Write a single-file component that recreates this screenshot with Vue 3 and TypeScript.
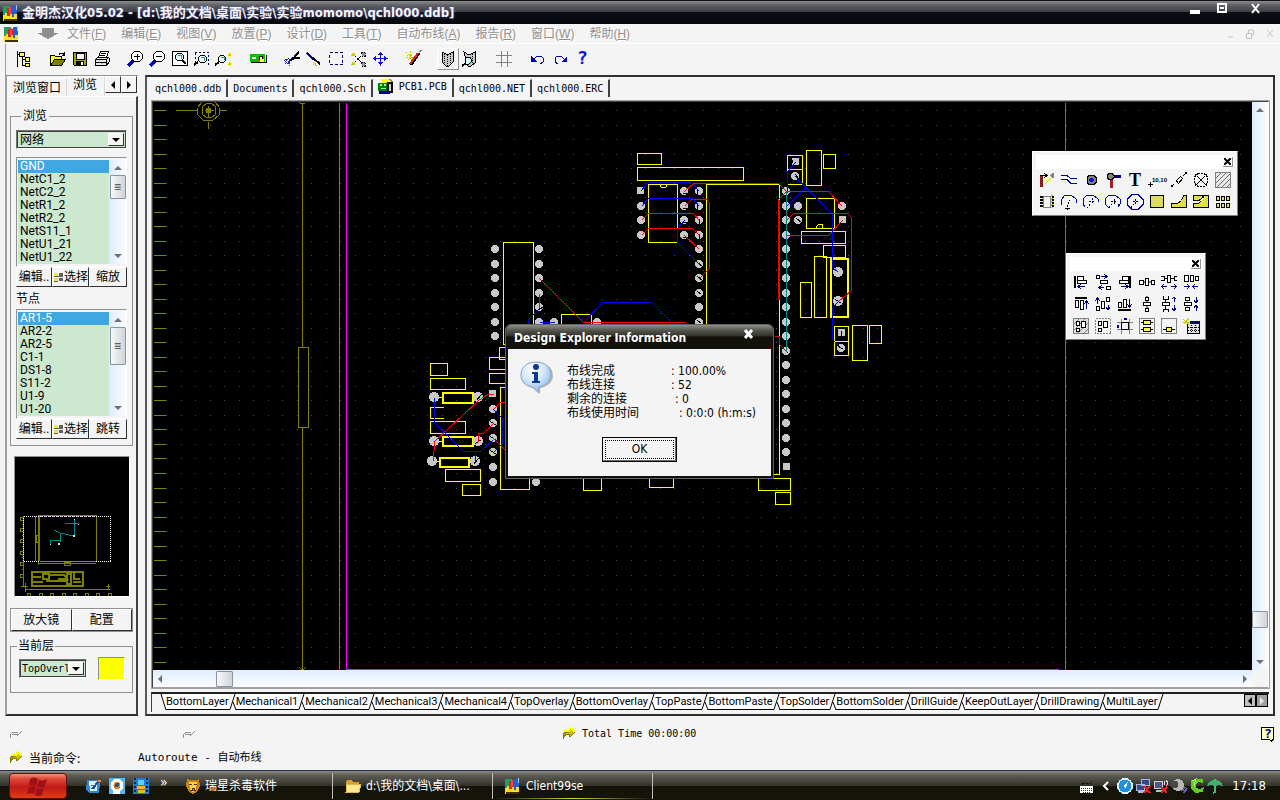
<script setup lang="ts">
import { h, ref } from 'vue'

type Shape = {
  d?: string
  f?: string
  s?: string
  w?: number
  dash?: string
  t?: string
  x?: number
  y?: number
  size?: number
  font?: string
}

const p = (d: string, f = 'none', s = 'none', w = 1, dash = ''): Shape => ({ d, f, s, w, dash })
const txt = (t: string, x: number, y: number, size: number, f = '#000', font = 'Liberation Serif'): Shape => ({ t, x, y, size, f, font })

const K = '#000'
const Y = '#ffff40'
const B = '#0000c0'
const N = '#000080'
const G = '#808080'
const O = '#c8c800'

const lens = 'M6.5.5h5l3 3v4l-3 3h-5l-3-3v-4z'

const icons: Record<string, Shape[]> = {
  app: [
    p('M0 1h7v9H0z', '#20a060'), p('M4 3h7v9H4z', '#e02020'), p('M9 1h5v11H9z', '#2060d0'),
    p('M13 0h1v5h-1z', '#a0c8ff'), p('M6 2h2v7H6z', '#ff4040'), p('M0 10h2v-2h2v3h3V9h2v3h2V9h3v7H0z', '#ffe020'),
    p('M1 14h13v2H1z', '#403000'), p('M1 12h12v2H1z', '#ffe020')
  ],
  drop: [p('M5 0h12v5h5L11 11 0 5h5z', '#909090')],
  tree: [
    p('M1.5 0v16M1.5 3.5H4M6.5 6v8.5H9M6.5 8.5H9', 'none', K), p('M3.500 1.500h5v4h-5z', Y, K),
    p('M9.500 6.500h4v4h-4zM9.500 12.500h4v3h-4z', Y, K)
  ],
  open: [
    p('M9 3.500c2-2.500 4-1.500 5 .5M14.500 1v3.500h-3', 'none', K), p('M.5 13.500v-9h4l1 1h6v3', Y, K),
    p('M.5 14.500l4-6h11l-4 6z', '#808000', K)
  ],
  save: [
    p('M1.500 1.500h13v13h-12l-1-1z', '#a8a400', K), p('M4 2h8v6H4z', '#f4f4f4', K), p('M4 10h8v4H4z', K), p('M9 11h2v3H9z', '#fff')
  ],
  print: [
    p('M4.500 6.500l2-6h8l-2 6z', '#fff', K), p('M7 2.500h5M6 4.500h5', 'none', K), p('M1.500 8.500l2-2h11l1 1v3l-3 4h-11z', '#e8e8e8', K),
    p('M1.500 8.500h11v5M12.500 8.500l2-2M2 11.500h10', 'none', K), p('M7 12h2v1H7z', O)
  ],
  zoomIn: [p(lens, '#fff', K), p('M6 5.500h6M9 3v6', 'none', K), p('M5 10L0 15', 'none', B, 3)],
  zoomOut: [p(lens, '#fff', K), p('M6 5.500h6', 'none', K), p('M5 10L0 15', 'none', B, 3)],
  zoomDoc: [
    p('M.5.5h15v14H.5z', '#fff', K), p('M5.500 2.500h4l2 2v3l-2 2h-4l-2-2v-3z', '#e8ffff', K), p('M10 9l4 4', 'none', K, 2), p('M6 4h3v4', 'none', '#20a0a0')
  ],
  zoomSel: [
    p('M1 1.500h13.500V14M1.500 2v12', 'none', N, 1, '2 2'), p('M6.500 4.500h4l2 2v3l-2 2h-4l-2-2v-3z', '#f4f4f4', K), p('M4 11l-4 3', 'none', K, 2), p('M7 6h3v4', 'none', '#20a0a0')
  ],
  zoomPts: [
    p('M4.500 4.500h3l2 2v3l-2 2h-3l-2-2v-3z', '#f4f4f4', K), p('M3 11l-4 3', 'none', K, 2), p('M5 6h3v3', 'none', '#20a0a0'),
    p('M12 2h3v3h-3zM12 11h3v3h-3z', O, Y, 1, '1 1')
  ],
  chip: [
    p('M0 3h15v8H0z', '#00c000'), p('M1 11h15V4', 'none', K), p('M2 6h4v2H2z', '#fff'), p('M7 7h3v4H7z', '#808000'),
    p('M9.500 5.500h3v3h-3z', '#fff', K), p('M10 8h4v3h-4z', Y)
  ],
  cut: [
    p('M15 .5L8 9M16 6.500H10L6 9.500', 'none', K, 2), p('M0 9.500l5-2 3 2M1 10l5 4M5 8v7M3 8l-1 4 5-2', 'none', '#2020e0', 1, '2 1')
  ],
  wire: [p('M1 2l7 7', 'none', N, 2), p('M7 7l7 6', 'none', K, 2), p('M7 13h4M9 10v5M7 11l4 4', 'none', O, 1, '1 1')],
  select: [p('M1.500 1.500h13v12h-13z', 'none', N, 1, '3 2')],
  desel: [
    p('M1 2h4v3H1zM1 11h4v3H1z', O, Y, 1, '1 1'), p('M5 5l6 6M5 11l6-6', 'none', K, 1, '2 1'),
    p('M11 1h3l1 1v3h-3zM11 11h3l1 1v3h-3z', '#909090', K, 1, '2 1')
  ],
  move: [p('M8.500 1.500v13M1.500 7.500h14', 'none', '#1010d0'), p('M6 4l2.500-3L11 4zM6 11l2.500 3 2.500-3zM4 5L1 7.500 4 10zM12 5l3 2.500-3 2.500z', '#1010d0')],
  wizard: [
    p('M0 1l7 7M4 0v8M0 6h7M8 1L2 9M1 4l5 5', 'none', O, 1, '2 1'), p('M13 2L5 14', 'none', K, 3), p('M12 2L4 13', 'none', '#e02020', 2),
    p('M13 1l3-2', 'none', G, 1)
  ],
  book: [p('M2 1l4 2h3l4-2v10l-4 4H6l-4-4z', '#c8c8c8', K), p('M7.500 4v11M4.500 3v10M10.500 3v10', 'none', K, 1, '1 1')],
  bookFind: [
    p('M2 1l5 3 6-3v11l-4 3H6z', '#c8c8c8', K), p('M10.500 3v10', 'none', K, 1, '1 1'), p('M4 6h4l1 2v3l-2 2H4l-1-3z', '#d0ffff', K), p('M4 12l-4 3', 'none', K, 2)
  ],
  grid: [p('M5.500 0v16M11.500 0v16M0 4.500h16M0 11.500h16', 'none', G)],
  undo: [p('M4 8l3-3h4l2 2v4l-3 2', 'none', B), p('M1 5v6h6z', B)],
  redo: [p('M12 8L9 5H5L3 7v4l3 2', 'none', B), p('M15 5v6H9z', B)],
  help: [txt('?', 3, 13, 18, '#1010e0', 'DejaVu Sans Mono')],
  pcb: [
    p('M3 0h8v4H3z', '#ffff00'), p('M0 4h9v8H0z', '#008000'), p('M9 3h6v11H9z', '#101010'), p('M11 5h2v7h-2z', '#d0d0d0'), p('M2 5h2v2H2zM6 5h2v2H6zM3 9h5v1H3z', '#a0ffa0'),
    p('M1 12h11v3H1z', '#000090'), p('M11 0l4 3', 'none', G)
  ],
  track: [
    p('M2.500 15V4', 'none', '#802020', 3), p('M1 3.500h6M5 1l3 2.500L5 6', 'none', K), p('M4 14l8-8', 'none', '#e0e000', 1, '2 1'), p('M15 1v5h-2l-2-2 2-3z', G)
  ],
  lines: [p('M0 3.500h6l4 3h6M0 7.500h6l4 4h6', 'none', N)],
  via: [p('M6 3.500h5l2 2v5l-2 2H6l-2-2v-5z', G, K), p('M7 6h3v1h1v2h-1v1H7V9H6V7h1z', '#1010d0')],
  pad: [p('M5 7h3v9H5z', '#a02020'), p('M8 3h8v3H8z', N), p('M4 1.500h3l2 2v2l-2 2H4l-2-2v-2z', G, K)],
  text: [txt('T', 2, 14, 18)],
  coord: [p('M-1 12.500h5M1.500 10v5', 'none', K), txt('10,10', 3, 10, 6, K, 'Liberation Sans')],
  dim: [p('M1 14L15 1', 'none', K, 1, '3 2'), p('M0 13h2v2H0zM14 0h2v2h-2z', K), p('M5.500 8.500l4-4 2 2-4 5z', '#f4f4f4', K)],
  cross: [p('M5 1.500h6l3.500 3.500v6L11 14.500H5L1.500 11V5zM2 2l12 12M14 2L2 14', 'none', K, 1, '2 1')],
  hatch: [p('M.5.5h15v15H.5z', '#e8e8e8', G), p('M1 6l5-5M1 11L11 1M1 16L16 1M6 16L16 6M11 16l5-5', 'none', '#707070')],
  comp: [
    p('M4.500 2.500h7v11h-7z', '#f4f4f4', G), p('M12.500 1v13', 'none', O, 2, '2 1'), p('M1 3h3M1 6h3M1 9h3M1 12h3M13 3h2M13 6h2M13 9h2M13 12h2', 'none', K, 2)
  ],
  arcEdge: [p('M1 11L0 6l4-5h6l5 4 1 4', 'none', B), p('M4 14h5M6.500 11v5M7 10l2-4', 'none', K, 1, '2 1')],
  arcCtr: [p('M2 13L0 10V5l4-4h6l5 4 1 3', 'none', B), p('M9 4v6M6 7.500h6M7 10l-3 5', 'none', N, 1, '2 1')],
  arcAny: [p('M4 14L0 10V5l4-4h6l5 4v5l-2 3', 'none', B), p('M9 5v6M6 7.500h5M7 10l-3 4M13 10h3', 'none', K, 1, '2 1')],
  circle: [p('M5 .5h6l5 5v5l-5 5H5l-5-5v-5z', 'none', B), p('M8 5v5M6 7.500h5M7 10l-3 4', 'none', K, 1, '2 1')],
  fill: [p('M1.500 1.500h13v12h-13z', '#dcdc60', K)],
  poly: [p('M.500 13.500v-4h6l4-3 2-5h3v12z', '#e0e040', K)],
  split: [p('M.500 13.500v-4h5l5-5V1.500h5v12z', '#e0e040', K), p('M.500 6.500v-5h9v3l-4 2z', '#e0e040', K), p('M1 8h5l6-5', 'none', '#fff')],
  array: [p('M1.500 2.500h3v4h-3zM6.500 2.500h3v4h-3zM11.500 2.500h3v4h-3zM1.500 9.500h3v4h-3zM6.500 9.500h3v4h-3zM11.500 9.500h3v4h-3z', '#e0e060', K)],
  alL: [p('M2 2v12', 'none', K, 2), p('M4.500 2.500h6v4h-6zM4.500 6.500h9v3h-9z', '#fff', K), p('M5 12.500h7M8 10l-3 2.500L8 15', 'none', N)],
  alCH: [p('M1.500 1.500h3v3h-3zM5.500 6.500h7v3h-7zM11.500 12.500h4v3h-4z', '#fff', K), p('M6 2.500h6M9 0l3 2.500L9 5M9 13.500H4M7 11l-3 2.500L7 16', 'none', N)],
  alR: [p('M13 2v12', 'none', K, 2), p('M5.500 2.500h6v4h-6zM2.500 6.500h9v3h-9z', '#fff', K), p('M4 12.500h7M8 10l3 2.500L8 15', 'none', N)],
  dsH: [p('M0 8h16', 'none', G, 2), p('M.500 6.500h4v4h-4zM6.500 4.500h3v7h-3zM12.500 6.500h3v4h-3z', '#fff', K)],
  incH: [p('M0 2.500h3v4H0M16 2.500h-3v4h3M3 4.500h10', 'none', K), p('M6.500 1.500h3v7h-3z', '#fff', K), p('M1 12.500h5M10 12.500h5M3 10l-2 2.500L3 15M13 10l2 2.500-2 2.500', 'none', N)],
  decH: [p('M1.500 1.500h4v6h-4zM7.500 1.500h3v6h-3zM12.500 2.500h3v4h-3z', '#fff', K), p('M1 12.500h5M10 12.500h5M4 10l2 2.500L4 15M12 10l-2 2.500L12 15', 'none', N)],
  alT: [p('M2 2h12', 'none', K, 2), p('M2.500 4.500h3v7h-3zM7.500 4.500h3v9h-3z', '#fff', K), p('M13.500 13V5M11 8l2.500-3L16 8', 'none', N)],
  alCV: [p('M1.500 10.500h3v4h-3zM6.500 5.500h3v7h-3zM11.500 1.500h3v4h-3z', '#fff', K), p('M2.500 8V2M0 5l2.500-3L5 5M13 9v5M11 11l2 3 2-3', 'none', N)],
  alB: [p('M1 14h13', 'none', K, 2), p('M1.500 6.500h3v5h-3zM6.500 3.500h3v8h-3z', '#fff', K), p('M12.500 3v8M10 8l2.500 3L15 8', 'none', N)],
  dsV: [p('M8 0v16', 'none', G, 2), p('M6.500 1.500h3v3h-3zM4.500 6.500h7v3h-7zM6.500 12.500h3v3h-3z', '#fff', K)],
  incV: [p('M2 0v3h5V0M2 16v-3h5v3M4.500 3v10', 'none', K), p('M1.500 6.500h7v3h-7z', '#fff', K), p('M13 1v5M11 3l2-2 2 2M13 9v6M11 12l2 3 2-3', 'none', N)],
  decV: [p('M4.500 2v13', 'none', G), p('M2.500 1.500h4v3h-4zM1.500 6.500h7v3h-7zM2.500 11.500h4v3h-4z', '#fff', K), p('M13 1v5M11 4l2 3 2-3M13 9v6M11 12l2-3 2 3', 'none', N)],
  rm1: [p('M.5.5h15v15H.5z', '#e0e0e0', G), p('M1 6l5-5M1 12L12 1M4 16L16 4M10 16l6-6', 'none', G), p('M3.500 3.500h3v4h-3zM8.500 3.500h4v6h-4zM3.500 10.500h3v3h-3z', '#fff', K)],
  rm2: [p('M.5.5h15v15H.5z', '#f4f4f4', G, 1, '2 1'), p('M3.500 3.500h3v4h-3zM8.500 3.500h4v6h-4zM3.500 10.500h3v3h-3z', '#fff', K)],
  snap: [p('M4.500 1v15M12.500 1v15M0 4.500h16M0 11.500h16', 'none', G), p('M4.500 4.500h7v7h-7z', '#f4f4f4', K), p('M7 0h3v2H7zM0 7h2v3H0z', N)],
  un1: [p('M.5.5h15v15H.5z', '#f4f4f4', G), p('M2 4.500h12M2 11.500h12', 'none', K), p('M4.500 2.500h7v4h-7zM4.500 9.500h7v4h-7z', Y, K)],
  un2: [p('M.5.5h15v15H.5z', '#f4f4f4', G), p('M2 11.500h12', 'none', K), p('M5.500 9.500h5v4h-5z', Y, K)],
  tbl: [p('M4.500 4.500h12v11h-12z', '#e0e0e0', K), p('M7 3h10v3H7z', N), p('M5 9.500h11M5 12.500h11M8.500 7v9M12.500 7v9', 'none', K, 1, '1 1'), p('M0 1l6 6M5 0L2 6M0 4h7M6 1L1 5', 'none', O)],
  arrow: [p('M2 13V9l2-3h4l1-3 5 3-5 5-1-3H5z', '#c8c000', '#807800'), p('M3 5h5l2-3 4 4', 'none', '#ffff00', 2)],
  arrowOff: [p('M2.500 12V8.500l2-2h5M9 10l5-5M4 8h6', 'none', '#909090'), p('M4 5h5l2-3 3 3', 'none', '#fff', 2)],
  ask: [p('M1.500 1.500h12v12h-1l-1 2-2-2h-8z', '#ffffc0', K), txt('?', 4, 12, 13, N, 'DejaVu Sans Mono')],
  ie: [p('M2 2h11l2 3-1 10H4L1 12z', '#3088d0'), p('M4 3h8v10H5z', '#d8f0ff'), p('M6 7h5M6 10h4', 'none', '#2070c0'), p('M7 11l7-8', 'none', '#1850a0', 2), p('M13 2h3v2h-3z', '#ff8030')],
  qq: [p('M0 0h16v16H0z', '#58b8e8'), p('M8 1a6.500 6.500 0 100 13A6.500 6.500 0 008 1', '#fff'), p('M8 4a3 3 0 100 7 3 3 0 000-7', '#e08020'), p('M8 5a2 2 0 100 4 2 2 0 000-4', '#205890'), p('M4 12h7v4H4z', '#fff')],
  film: [p('M0 0h16v16H0z', '#2878d8'), p('M2 0v16M14 0v16', 'none', '#082850', 2, '2 2'), p('M5 2h6v5H5z', '#60d0ff'), p('M4 8h8v3H4zM5 12h7v3H5z', '#f0b820')],
  lion: [p('M2 1l3 1h6l3-1 1 7-3 6-4 2-4-2-3-6z', '#c88010'), p('M4 4h8l-1 8-3 2-3-2z', '#ffd050'), p('M4 6l3 1M12 6L9 7M7 10h2v2H7zM5 12h6', 'none', '#503000')],
  folder: [p('M1 3l1-1h5l1 2h6v10H1z', '#d8a030'), p('M1 14l1-8h14l-2 8z', '#ffe890', '#e0b850')],
  kbd: [p('M1 8h13v7H1z', '#fff'), p('M2 10h11M2 12h11M4 14h7', 'none', '#303030', 1, '1 1'), p('M3 7V5h9V3', 'none', '#101010', 1, '2 1')],
  globe: [p('M8 0a8 8 0 100 16A8 8 0 008 0', '#d8f4ff'), p('M8 1.500a6.500 6.500 0 100 13 6.500 6.500 0 000-13', '#2090e0'), p('M6 8l5-5-2 7z', '#fff')],
  net: [p('M6.500 1.500h8v6h-8zM1.500 6.500h8v6h-8z', '#384888', '#b0b8d8'), p('M3 14h6', 'none', '#b0b8d8', 2), p('M9 8l6 7M15 8l-6 7', 'none', '#e82020', 2)],
  wifi: [p('M1.500 3.500h8v7h-8z', '#505880', '#d0d0e0'), p('M3 13h6', 'none', '#c0c0d0', 2), p('M11 3l1 2-1 2M13 2l2 3-2 4', 'none', '#e0e0e0'), p('M8 9l6 6M14 9l-6 6', 'none', '#e82020', 2)],
  sound: [p('M7 1a6 6 0 100 12A6 6 0 007 1', '#b8b8b8'), p('M5 3a4 4 0 100 7 4 4 0 000-7', '#484848'), p('M11 13l3-4M13 15l3-5', 'none', '#6868a0', 2)],
  cgreen: [p('M2 2l12-1v4l-4-1-3 2v4l4 1 4-2-1 5-8 1-4-4z', '#60d020'), p('M3 3l4-2-2 7', 'none', '#c0ff80')],
  umb: [p('M0 8c1-5 4-6 8-6s7 1 8 6l-4-1-4 1-4-1z', '#40b070'), p('M8 8v6l-2 1M8 1v2', 'none', '#40c070', 2)]
}

const Icon = (props: { n: string; w?: number; ht?: number }) =>
  h(
    'svg',
    {
      width: props.w ?? 16,
      height: props.ht ?? 16,
      viewBox: `0 0 ${props.w ?? 16} ${props.ht ?? 16}`,
      'aria-hidden': 'true',
      class: 'icon'
    },
    icons[props.n].map((s) =>
      s.t
        ? h('text', { x: s.x, y: s.y, fill: s.f, 'font-size': s.size, 'font-family': s.font, 'font-weight': 'bold' }, s.t)
        : h('path', {
            d: s.d,
            fill: s.f,
            stroke: s.s,
            'stroke-width': s.w,
            'stroke-dasharray': s.dash || undefined,
            'shape-rendering': 'crispEdges'
          })
    )
  )
Icon.props = ['n', 'w', 'ht']

const menus: [string, string][] = [
  ['文件', 'F'], ['编辑', 'E'], ['视图', 'V'], ['放置', 'P'], ['设计', 'D'],
  ['工具', 'T'], ['自动布线', 'A'], ['报告', 'R'], ['窗口', 'W'], ['帮助', 'H']
]

const toolGroups: string[][] = [
  ['tree'], ['open', 'save', 'print'], ['zoomIn', 'zoomOut', 'zoomDoc', 'zoomSel', 'zoomPts'], ['chip'],
  ['cut', 'wire', 'select', 'desel', 'move'], ['wizard'], ['book', 'bookFind'], ['grid'], ['undo', 'redo', 'help']
]

const docs = ['qchl000.ddb', 'Documents', 'qchl000.Sch', 'PCB1.PCB', 'qchl000.NET', 'qchl000.ERC']
const activeDoc = ref('PCB1.PCB')

const nets = ['GND', 'NetC1_2', 'NetC2_2', 'NetR1_2', 'NetR2_2', 'NetS11_1', 'NetU1_21', 'NetU1_22']
const nodes = ['AR1-5', 'AR2-2', 'AR2-5', 'C1-1', 'DS1-8', 'S11-2', 'U1-9', 'U1-20']
const activeNet = ref('GND')
const activeNode = ref('AR1-5')

const layers = [
  'BottomLayer', 'Mechanical1', 'Mechanical2', 'Mechanical3', 'Mechanical4', 'TopOverlay', 'BottomOverlay', 'TopPaste',
  'BottomPaste', 'TopSolder', 'BottomSolder', 'DrillGuide', 'KeepOutLayer', 'DrillDrawing', 'MultiLayer'
]
const activeLayer = ref('TopOverlay')

const placeTools = [
  'track', 'lines', 'via', 'pad', 'text', 'coord', 'dim', 'cross', 'hatch',
  'comp', 'arcEdge', 'arcCtr', 'arcAny', 'circle', 'fill', 'poly', 'split', 'array'
]
const alignTools = [
  'alL', 'alCH', 'alR', 'dsH', 'incH', 'decH', 'alT', 'alCV', 'alB', 'dsV', 'incV', 'decV', 'rm1', 'rm2', 'snap', 'un1', 'un2', 'tbl'
]

const report = [
  { label: '布线完成', spaces: 14, value: '100.00%' },
  { label: '布线连接', spaces: 14, value: '52' },
  { label: '剩余的连接', spaces: 12, value: '0' },
  { label: '布线使用时间', spaces: 10, value: '0:0:0 (h:m:s)' }
]

const step = 14.52
let gridDots = ''
for (let r = 0; r < 39; r++) {
  for (let c = -1; c < 74; c++) gridDots += `M${Math.round(179.5 + c * step)} ${Math.round(110 + r * step)}h1`
}
let ruler = ''
for (let r = 0; r < 39; r++) ruler += `M153 ${Math.round(110 + r * step)}h12`

const col = (x: number, ys: number[]) => ys.map((y) => [x, y])
const pads = [
  ...col(495, [249, 264, 278, 293, 307, 322, 336]),
  ...col(539, [249, 264, 278, 293, 307, 322]),
  ...col(493, [409, 423, 438, 452, 467, 482]),
  [536, 482], [554, 322], [597, 322],
  ...col(641, [206, 220, 235]),
  ...col(684, [191, 206, 220, 235]),
  ...col(699, [191, 206, 220, 235, 249, 264, 278, 293, 307, 322]),
  ...col(786, [191, 206, 220, 235, 249, 264, 278, 293, 307, 322, 336, 351, 365, 380, 394, 409, 423, 438, 452]),
  [795, 176], [798, 206], [798, 220], [842, 206], [841, 348]
]
const bigPads = [[434, 397], [478, 397], [434, 441], [478, 441], [432, 461], [475, 461], [838, 272], [838, 301]]
const squarePads = [[492, 394], [640, 191], [795, 162], [842, 220], [841, 333], [786, 467]]
const outlines = [
  [503, 242, 30, 102], [499, 347, 20, 12], [489, 357, 30, 12], [489, 373, 30, 10], [500, 387, 29, 102], [561, 314, 30, 20],
  [430, 363, 17, 12], [430, 378, 35, 11], [430, 421, 35, 12], [445, 469, 35, 12], [462, 484, 18, 11],
  [583, 470, 18, 20], [649, 470, 24, 17], [758, 478, 32, 12], [775, 492, 15, 12],
  [637, 153, 24, 11], [637, 167, 106, 13], [648, 184, 29, 58], [706, 184, 73, 290],
  [787, 155, 15, 29], [806, 150, 15, 35], [823, 154, 12, 14], [806, 198, 28, 30], [801, 231, 44, 12], [823, 245, 22, 12],
  [800, 282, 11, 35], [814, 256, 12, 61], [834, 326, 14, 29], [852, 325, 15, 35], [869, 325, 12, 18]
]
</script>

<template>
  <div class="screen">
    <header class="titlebar">
      <Icon n="app" />
      <h1>金明杰汉化05.02 - [d:\我的文档\桌面\实验\实验momomo\qchl000.ddb]</h1>
      <div class="win">
        <button aria-label="最小化"><svg width="12" height="12"><path d="M1 7h10v4H1z" fill="#fff" /></svg></button>
        <button aria-label="还原"><svg width="12" height="12"><path d="M2 1h8v8H2z M4 5h4" fill="none" stroke="#fff" stroke-width="2" /></svg></button>
        <button aria-label="关闭"><svg width="12" height="12"><path d="M2 1l7 9M9 1L2 10" stroke="#fff" stroke-width="2" /></svg></button>
      </div>
    </header>

    <nav class="menubar">
      <Icon n="app" />
      <span class="drop"><Icon n="drop" :w="22" :ht="12" /></span>
      <button v-for="[label, key] in menus" :key="key">{{ label }}(<u>{{ key }}</u>)</button>
      <svg class="mdi" width="50" height="12" aria-hidden="true">
        <path d="M2 9h5M20.500 5.500h5v5h-5zM22.500 5v-3h5v5h-2M41 2l6 7M47 2l-6 7" fill="none" stroke="#c4c4c4" stroke-width="1" />
      </svg>
    </nav>

    <div class="toolbar">
      <div v-for="(g, i) in toolGroups" :key="i" class="group">
        <button v-for="n in g" :key="n" :class="['tool', { raised: n === 'book' }]" :aria-label="n"><Icon :n="n" /></button>
      </div>
    </div>

    <div class="work">
      <aside class="side">
        <div class="side-tabs">
          <button class="st">浏览窗口</button>
          <button class="st on">浏览</button>
          <button class="spin" aria-label="左移"><i class="tri left"></i></button>
          <button class="spin" aria-label="右移"><i class="tri right"></i></button>
        </div>
        <div class="page">
          <fieldset class="browse">
            <legend>浏览</legend>
            <label class="combo">
              <select aria-label="浏览类型"><option>网络</option></select>
              <span class="cbtn"><i class="tri down"></i></span>
            </label>
            <div class="list">
              <ul role="listbox" aria-label="网络">
                <li v-for="n in nets" :key="n" role="option" :aria-selected="n === activeNet" :class="{ on: n === activeNet }" @click="activeNet = n">{{ n }}</li>
              </ul>
              <div class="vbar"><i class="tri up grey"></i><span class="thumb short">≡</span><i class="tri down grey end"></i></div>
            </div>
            <div class="btns">
              <button>编辑..</button>
              <button class="pick"><svg width="9" height="10"><path d="M0 1h4v3H0zM0 6h4v3H0z" fill="#e8e840" /><path d="M5 1h4v3H5zM5 6h4v3H5zM0 4h9v1H0zM0 9h4v1H0z" fill="#606060" /></svg>选择</button>
              <button>缩放</button>
            </div>
            <div class="cap">节点</div>
            <div class="list">
              <ul role="listbox" aria-label="节点">
                <li v-for="n in nodes" :key="n" role="option" :aria-selected="n === activeNode" :class="{ on: n === activeNode }" @click="activeNode = n">{{ n }}</li>
              </ul>
              <div class="vbar"><i class="tri up grey"></i><span class="thumb">≡</span><i class="tri down grey end"></i></div>
            </div>
            <div class="btns">
              <button>编辑..</button>
              <button class="pick"><svg width="9" height="10"><path d="M0 1h4v3H0zM0 6h4v3H0z" fill="#e8e840" /><path d="M5 1h4v3H5zM5 6h4v3H5zM0 4h9v1H0zM0 9h4v1H0z" fill="#606060" /></svg>选择</button>
              <button>跳转</button>
            </div>
          </fieldset>

          <svg class="mini" viewBox="15 458 114 139" shape-rendering="crispEdges" role="img" aria-label="预览">
            <g fill="none" stroke="#808000">
              <path d="M38 516.500h59M96.500 516v47M38.500 516v50M38 564.500h58M35.500 517v45M36 536h2v7h-2zM64 563h6v3h-6z" />
              <path d="M23.500 517v70M20 518h3v3h-3zM20 529h3v3h-3zM20 540h3v3h-3zM20 552h3v3h-3zM20 563h3v3h-3zM20 575h3v3h-3zM21 587h7M26 590.500h84" />
              <path d="M24 525h-2M24 536h-2M24 547h-2M24 558h-2M24 570h-2" />
              <path d="M27 594h3v3h-3zM39 594h3v3h-3zM50 594h3v3h-3zM62 594h3v3h-3zM73 594h3v3h-3zM85 594h3v3h-3zM96 594h3v3h-3zM108 594h3v3h-3zM108 585v5M106 587h4M25 584v9" />
              <path d="M31.500 572.500h51v14h-51z" stroke-width="2" />
              <path d="M33 578h8M33 583h10M43 575h6v5h-6zM50 576h14l3 4h-9M46 582h20M67 575h4v10h-4zM74 574v6h6M73 583h8" stroke-width="2" />
            </g>
            <path d="M39.500 517v45" stroke="#f0f" /><path d="M40 517.500h55" stroke="#0f0" stroke-dasharray="2 2" />
            <path d="M23.500 517.500h87v45h-87z" fill="none" stroke="#fff" stroke-dasharray="1 1" />
            <path d="M40 562.500h56" stroke="#7878c0" />
            <path d="M65 524.500h13M74.500 521v16M74 537l-14-3-6-3M60.500 534v9M50.500 546v-5h9" fill="none" stroke="#008888" />
            <path d="M78 525h1v1h-1zM74 520h1v1h-1zM73 536h2v2h-2zM58 544h2v2h-2zM50 545h1v1h-1z" fill="#c0e8e8" />
          </svg>

          <div class="btns wide"><button>放大镜</button><button>配置</button></div>

          <fieldset class="layer">
            <legend>当前层</legend>
            <div class="layer-row">
              <label class="combo mono">
                <select aria-label="当前层"><option>TopOverlay</option></select>
                <span class="cbtn"><i class="tri down"></i></span>
              </label>
              <span class="swatch"></span>
            </div>
          </fieldset>
        </div>
      </aside>

      <main class="doc">
        <div class="doc-tabs">
          <button v-for="d in docs" :key="d" :class="{ on: d === activeDoc }" @click="activeDoc = d"><Icon v-if="d === 'PCB1.PCB'" n="pcb" />{{ d }}</button>
        </div>
        <div class="view">
          <svg class="board" viewBox="153 102 1099 568" preserveAspectRatio="xMinYMin slice" role="img" aria-label="PCB">
            <g shape-rendering="crispEdges" transform="translate(.5 .5)" fill="none">
              <path :d="gridDots" stroke="#4c4c54" />
              <path :d="ruler" stroke="#808000" />
              <g stroke="#808000">
                <path d="M175 110h22M218 110h8M208 121v7M197 107l4-5M219 107l-4-5M197 107v7l6 6h9l7-6v-7M202 106v8l4 3h5l4-3v-8l-4-3h-5zM204 110h9M208 105v12" />
                <path d="M206 108h4v4h-4z" fill="#808000" />
                <path d="M302 102v245M302 427v243M298 347h10v80h-10zM299 102l3 2 3-2M299 667l3 3 3-3M339 102v568M1065 514v156" />
              </g>
              <path d="M346 102v567h712" stroke="#f0f" />
              <path d="M1065 102v412" stroke="#808000" />
              <g stroke="#ff0">
                <rect v-for="(o, i) in outlines" :key="i" :x="o[0]" :y="o[1]" :width="o[2]" :height="o[3]" />
                <path d="M443 407h-13v11h13M787 169h15M834 341h14M659 184l2 3h4l2-3M816 228v-2l2-2h4v3" />
                <path d="M442 392h30v10h-30zM442 436h30v9h-30zM439 457h29v9h-29zM830 258h17v58h-17z" stroke-width="2" />
                <path d="M437 397h5M472 397h4M437 441h5M472 441h4M434 461h5M468 461h4" />
              </g>
            </g>
            <g fill="#c8c8c8" shape-rendering="crispEdges">
              <circle v-for="(c, i) in pads" :key="i" :cx="c[0]" :cy="c[1]" r="4" />
              <circle v-for="(c, i) in bigPads" :key="i" :cx="c[0]" :cy="c[1]" r="5" />
              <rect v-for="(c, i) in squarePads" :key="i" :x="c[0] - 3" :y="c[1] - 4" width="7" height="7" />
            </g>
            <g shape-rendering="crispEdges" fill="none" transform="translate(.5 .5)">
              <path stroke="#000" d="M539 309l4-3M682 193h6M682 208h6M682 222h6M682 237h6M697 189v6M697 204v6M699 218v6M699 233v6M697 262l5 4M697 276l5 4M697 291l4 3M697 320l4 3M792 159v3M795 174l3 4M796 218l5 4M835 299l6 4M838 346l5 3M841 330v7M476 400l5-6M475 443l6-4M473 464l5-6M490 421l6 4M490 436l6 4M490 450l6 4M784 189l4 4M784 349l4 4" />
              <path stroke="#f00" d="M539 278l44 44h102M493 394h-6l-9 6-44 41-1 20M493 423l-10 10h-5v8M493 409l7-7h6M493 438l13 13M684 191l9-8h85l8 8h42l14 15M684 206l7-7h15l3 3v66l-10 10M641 220l7-7h45l6 7M641 235l7-7h44l7 7M684 235l15 14M786 191l-8 8v100M786 220l7-7h54l4 4v73l-13 11M786 235h42l14-15M774 336h5v8l7 7M539 293v14" />
              <path stroke="#00f" d="M539 308l-11 11v6M539 322h15M583 322l19-20h49l21 21M434 397v25l29 29h17l13-12M475 461v-10M493 409l9 9v25l-9 9M640 191l8-9h43l8 9M641 206l7-8h44l7 8M684 220l-7 8v14l22 22M795 162l-8 9v19M786 206l19-19-10-11M795 176l37 38v53l6 5M838 301l-6 6v32l9 9" />
              <path stroke="#008888" d="M786 191v160" /><path stroke="#f00" d="M779 199v100" />
            </g>
          </svg>

          <section class="palette place" aria-label="放置工具">
            <div class="ptitle"><button aria-label="关闭"><svg width="7" height="7"><path d="M0 0l7 7M7 0L0 7" stroke="#000" stroke-width="2" /></svg></button></div>
            <div class="pgrid"><button v-for="n in placeTools" :key="n" class="tool" :aria-label="n"><Icon :n="n" /></button></div>
          </section>
          <section class="palette align" aria-label="排列工具">
            <div class="ptitle"><button aria-label="关闭"><svg width="7" height="7"><path d="M0 0l7 7M7 0L0 7" stroke="#000" stroke-width="2" /></svg></button></div>
            <div class="pgrid"><button v-for="n in alignTools" :key="n" class="tool" :aria-label="n"><Icon :n="n" /></button></div>
          </section>

          <div class="vbar big"><i class="tri up grey"></i><span class="thumb vthumb"></span><i class="tri down grey"></i></div>
          <div class="hbar"><i class="tri left grey"></i><span class="thumb hthumb"></span><i class="tri right grey"></i></div>
          <div class="corner"></div>
        </div>
        <div class="layers">
          <div class="ltabs">
            <svg class="sep" width="6" height="17" aria-hidden="true"><path d="M0 0h6v16H5z" fill="#fff" /><path d="M1 0l5 16" stroke="#000" /></svg>
            <template v-for="l in layers" :key="l">
              <button :class="{ on: l === activeLayer }" @click="activeLayer = l">{{ l }}</button>
              <svg class="sep" width="7" height="17" aria-hidden="true">
                <path d="M0 16L5 0h2v16z" :fill="l === 'MultiLayer' ? '#f4f4f4' : '#fff'" />
                <path d="M0 15.500h1L6 0" fill="none" stroke="#000" />
                <path v-if="l !== 'MultiLayer'" d="M4 8l3 8" stroke="#000" />
              </svg>
            </template>
          </div>
          <span class="lspin"><button aria-label="左"><i class="tri left"></i></button><button class="dis" aria-label="右"><i class="tri right"></i></button></span>
        </div>
      </main>
    </div>

    <footer class="status">
      <div class="row one">
        <Icon n="arrowOff" /><Icon n="arrowOff" />
        <span class="msg"><Icon n="arrow" />Total Time 00:00:00</span>
        <Icon n="ask" />
      </div>
      <div class="row two"><span class="msg"><Icon n="arrow" />当前命令:</span><span>Autoroute - 自动布线</span></div>
    </footer>

    <div class="taskbar">
      <button class="start" aria-label="开始">
        <svg width="22" height="20"><path d="M3 3q4-3 8 0l-2 7q-4-2-7 0zM12 4q4 2 8-1l-2 7q-4 3-8 0zM2 11q4-2 7 0l-2 7q-3-2-7 0zM10 12q4 2 7 0l-2 7q-4 2-7 0z" fill="#9c1018" /></svg>
      </button>
      <div class="quick"><Icon n="ie" /><Icon n="qq" /><Icon n="film" /><span>»</span></div>
      <button class="task first"><Icon n="lion" />瑞星杀毒软件</button>
      <button class="task"><Icon n="folder" />d:\我的文档\桌面\...</button>
      <button class="task cur"><Icon n="app" />Client99se</button>
      <div class="tray">
        <Icon n="kbd" />
        <svg class="chev" width="8" height="10"><path d="M6 1L2 5l4 4" fill="none" stroke="#fff" stroke-width="2" /></svg>
        <Icon n="globe" /><Icon n="net" /><Icon n="wifi" /><Icon n="sound" /><Icon n="cgreen" /><Icon n="umb" />
        <time>17:18</time>
      </div>
    </div>

    <div class="dialog" role="dialog" aria-labelledby="dlg-title">
      <div class="dtitle">
        <h2 id="dlg-title">Design Explorer Information</h2>
        <button aria-label="关闭"><svg width="11" height="10"><path d="M2 1l7 8M9 1L2 9" stroke="#fff" stroke-width="3" /></svg></button>
      </div>
      <div class="dbody">
        <svg class="info" width="34" height="34" viewBox="0 0 34 34">
          <defs>
            <radialGradient id="bub" cx="40%" cy="25%" r="75%"><stop offset="0" stop-color="#fff" /><stop offset=".5" stop-color="#d4e8fb" /><stop offset="1" stop-color="#88b4e0" /></radialGradient>
          </defs>
          <path d="M18 2C9 2 3 7 3 15c0 6 4 11 11 12l6 6v-6c7-1 13-6 13-12C33 7 27 2 18 2z" fill="#00000040" />
          <path d="M16 1C7 1 1 6 1 14c0 6 4 11 11 12l7 6v-6c7-1 12-6 12-12C31 6 25 1 16 1z" fill="url(#bub)" stroke="#88a4c8" />
          <circle cx="16" cy="6" r="3" fill="#103890" />
          <path d="M12 11h6v9h2v2h-8v-2h2v-7h-2z" fill="#103890" />
        </svg>
        <div class="report">
          <p v-for="r in report" :key="r.label">{{ r.label }}<span :style="{ marginLeft: r.spaces * 4 + 'px' }">: {{ r.value }}</span></p>
        </div>
        <button class="ok"><span>OK</span></button>
      </div>
    </div>
  </div>
</template>

<style>
body {
  margin: 0;
  background: #f4f4f4;
}
.icon {
  display: block;
  flex: none;
  overflow: visible;
}
</style>

<style scoped>
.screen {
  position: relative;
  display: flex;
  flex-direction: column;
  min-height: 100vh;
  box-sizing: border-box;
  background: #f4f4f4;
  color: #000;
  font: 12px/14px "Liberation Sans", "Noto Sans CJK SC", sans-serif;
}
.screen * { box-sizing: border-box; }
button {
  padding: 0;
  border: 0;
  background: none;
  color: inherit;
  font: inherit;
  white-space: nowrap;
}
h1, h2, p, ul { margin: 0; padding: 0; }
li { list-style: none; }

.titlebar {
  display: flex;
  align-items: center;
  height: 24px;
  padding: 0 18px 0 3px;
  gap: 3px;
  border-top: 1px solid #101010;
  background: linear-gradient(#8a8c90, #5c5e63 20%, #3c3e43 48%, #0a0d12 50%, #04070c);
  color: #f4f4fa;
}
h1 {
  flex: 1;
  font: bold 13px/18px "DejaVu Sans Condensed", "Noto Sans CJK SC", sans-serif;
  white-space: nowrap;
  overflow: hidden;
  text-shadow: 0 0 3px #6060a0;
}
.win { display: flex; gap: 15px; align-self: flex-start; padding-top: 2px; }
.win svg { display: block; }
.win button:last-child { margin-left: 7px; }

.menubar {
  display: flex;
  align-items: center;
  height: 20px;
  padding: 0 4px;
  border-bottom: 1px solid #fff;
  color: #909090;
  gap: 15px;
}
.drop { margin: 0 -7px 0 2px; }
.menubar button { text-shadow: 1px 1px #fff; }
.mdi { margin-left: auto; }

.toolbar {
  display: flex;
  align-items: center;
  gap: 12px;
  height: 31px;
  padding: 0 8px 1px 7px;
  margin-left: 5px;
  border-left: 1px solid #a0a0a0;
}
.group { display: flex; }
.tool {
  display: grid;
  place-items: center;
  width: 22px;
  height: 22px;
}
.raised {
  border: 1px solid;
  border-color: #fff #909090 #909090 #fff;
}

.work {
  flex: 1;
  display: flex;
  gap: 7px;
  padding: 0 5px;
}
.side {
  display: flex;
  flex-direction: column;
  width: 133px;
  flex: none;
  border-left: 2px solid #a0a0a0;
  border-top: 1px solid #909090;
  border-bottom: 2px solid #303030;
}
.side-tabs {
  display: flex;
  align-items: flex-end;
  height: 20px;
}
.st {
  height: 18px;
  padding: 0 5px 0 6px;
  border-top: 1px solid #fff;
  border-right: 1px solid #d8d8d8;
}
.st.on {
  height: 20px;
  padding: 0 7px 4px 6px;
}
.spin {
  display: grid;
  place-items: center;
  width: 16px;
  height: 17px;
  align-self: flex-start;
  border: 1px solid;
  border-color: #fff #303030 #303030 #fff;
}
.page {
  flex: 1;
  display: flex;
  flex-direction: column;
  padding: 11px 3px 0;
  border-top: 1px solid #fff;
  border-right: 2px solid #404040;
}
fieldset {
  min-width: 0;
  margin: 0;
  padding: 6px 5px;
  border: 1px solid #909090;
}
legend {
  height: 16px;
  line-height: 16px;
  margin-left: 5px;
  padding: 0 2px;
}
.combo {
  display: flex;
  height: 19px;
  border: 1px solid;
  border-color: #707070 #fff #fff #707070;
  outline: 1px solid #404040;
  outline-offset: -2px;
  background: #cce8cf;
  padding: 2px;
}
.combo select {
  flex: 1;
  min-width: 0;
  width: 0;
  padding: 0 1px;
  border: 0;
  appearance: none;
  background: #cce8cf;
  color: #000;
  font: 12px/14px "Liberation Sans", "Noto Sans CJK SC", sans-serif;
  text-overflow: clip;
}
.combo.mono select { padding: 0; font: 10px/14px "DejaVu Sans Mono", monospace; }
.cbtn {
  display: grid;
  place-items: center;
  width: 16px;
  background: #f4f4f4;
  border: 1px solid;
  border-color: #fff #303030 #303030 #fff;
}
.tri {
  display: block;
  width: 0;
  height: 0;
  border: 4px solid transparent;
}
.tri.down { border-top-color: #000; border-bottom: 0; }
.tri.up { border-bottom-color: #000; border-top: 0; }
.tri.left { border-right-color: #000; border-left: 0; }
.tri.right { border-left-color: #000; border-right: 0; }
.tri.down.grey { border-top-color: #707070; }
.tri.up.grey { border-bottom-color: #707070; }
.tri.left.grey { border-right-color: #707070; }
.tri.right.grey { border-left-color: #707070; }
.list {
  display: flex;
  margin-top: 8px;
  padding: 2px 0 2px 1px;
  border: 1px solid;
  border-color: #909090 #fff #fff #909090;
}
.list ul {
  flex: 1;
  background: #cce8cf;
  font: 12px/13px Roboto, "Liberation Sans", sans-serif;
}
.list li { padding-left: 2px; }
.list li.on { background: #40a8e0; color: #fff; }
.vbar {
  display: flex;
  flex-direction: column;
  align-items: center;
  width: 17px;
  padding: 6px 0;
  background: linear-gradient(90deg, #dcebfd, #fbfdff);
}
.thumb {
  display: grid;
  place-items: center;
  width: 16px;
  height: 38px;
  margin-top: 5px;
  border: 1px solid #8494a4;
  border-radius: 1px;
  background: linear-gradient(90deg, #f8f8f8, #d0d4da);
  color: #404040;
}
.thumb.short { height: 24px; }
.end { margin-top: auto; }
.btns { display: grid; grid-template-columns: 36px 37px 38px; }
.btns button {
  height: 20px;
  overflow: hidden;
  border: 1px solid;
  border-color: #fff #303030 #303030 #fff;
}
.btns .pick { display: flex; align-items: center; gap: 1px; padding-left: 1px; }
.pick svg { flex: none; }
.cap { height: 22px; line-height: 24px; margin-bottom: -8px; }
.mini {
  display: block;
  width: 116px;
  height: 141px;
  margin: 10px 0 11px 4px;
  border: 1px solid;
  border-color: #909090 #fff #fff #909090;
  background: #000;
}
.wide { grid-template-columns: 1fr 1fr; border: 1px solid #909090; }
.wide button { height: 22px; }
.layer { margin-top: 6px; padding: 3px 7px 12px 8px; }
.layer legend { margin-left: -2px; padding: 0 1px; }
.layer-row { display: flex; justify-content: space-between; align-items: center; }
.mono { width: 68px; }
.swatch {
  width: 27px;
  height: 23px;
  border: 1px solid;
  border-color: #909090 #fff #fff #909090;
  background: #ff0;
}

.doc {
  flex: 1;
  min-width: 0;
  display: flex;
  flex-direction: column;
  border: 2px solid #303030;
  border-left-color: #585858;
  padding: 1px 4px 2px;
}
.doc-tabs {
  display: flex;
  align-items: flex-end;
  height: 21px;
  margin: 0 0 2px -1px;
  padding-bottom: 2px;
  font: 10px/18px "DejaVu Sans Mono", monospace;
}
.doc-tabs button {
  display: flex;
  align-items: center;
  height: 18px;
  padding: 0 5px;
  border-right: 2px solid #404040;
  border-top: 1px solid #fff;
}
.doc-tabs button.on { height: 19px; gap: 5px; padding-bottom: 3px; }
.view {
  position: relative;
  flex: 1;
  display: grid;
  grid-template-columns: minmax(0, 1fr) 16px;
  grid-template-rows: minmax(0, 1fr) 17px;
  margin-left: 1px;
  border: 1px solid;
  border-color: #404040 #fff #a0a0a0 #404040;
  outline: 1px solid #a0a0a0;
}
.board {
  display: block;
  width: 100%;
  height: 100%;
  background: #000;
}
.vbar.big { width: 16px; grid-column: 2; grid-row: 1; justify-content: space-between; }
.vthumb { height: 17px; margin: auto 0 32px; }
.hbar {
  display: flex;
  align-items: center;
  padding: 0 5px;
  background: linear-gradient(#e0edfd, #fbfdff);
}
.hbar .tri:last-child { margin-left: auto; }
.hthumb { width: 17px; height: 16px; margin: 0 0 0 54px; }
.palette {
  position: absolute;
  padding: 3px 3px 2px;
  border: 1px solid;
  border-color: #fff #808080 #808080 #fff;
  background: #f4f4f4;
}
.place { top: 49px; right: 30px; }
.align { top: 151px; right: 62px; }
.ptitle {
  display: flex;
  justify-content: flex-end;
  align-items: center;
  height: 14px;
  padding-right: 1px;
  background: #fff;
}
.ptitle button {
  display: grid;
  place-items: center;
  width: 10px;
  height: 10px;
  border-right: 1px solid #909090;
  border-bottom: 1px solid #909090;
}
.pgrid { display: grid; grid-template-columns: repeat(9, 22px); }
.align .pgrid { grid-template-columns: repeat(6, 22px); }

.layers {
  display: flex;
  align-items: flex-start;
  margin-top: 4px;
  height: 20px;
  border-top: 2px solid #202020;
  border-left: 1px solid #404040;
  padding-left: 8px;
  font: 11px/15px Roboto, "Liberation Sans", sans-serif;
}
.ltabs { flex: 1; display: flex; min-width: 0; }
.ltabs button {
  height: 16px;
  border-bottom: 1px solid #000;
  background: #fff;
}
.ltabs button.on { background: #f4f4f4; border-bottom-color: #909090; }
.sep { flex: none; display: block; }
.lspin { display: flex; margin-right: 1px; }
.lspin button {
  display: grid;
  place-items: center;
  width: 12px;
  height: 13px;
  border: 1px solid #000;
  background: #c0c0c0;
}
.lspin .dis { background: #a0a0a0; }
.lspin .dis .tri { border-left-color: #e8e8e8; }

.status {
  height: 54px;
  padding: 6px 4px 0 8px;
  font: 10px/24px "DejaVu Sans Mono", "Noto Sans CJK SC", monospace;
}
.row { display: grid; align-items: center; height: 24px; }
.one { grid-template-columns: 173px 380px 1fr auto; }
.two { grid-template-columns: 130px 1fr; font-family: "Noto Sans CJK SC", monospace; font-size: 12px; }
.two span:last-child { font-family: "DejaVu Sans Mono", "Noto Sans CJK SC", monospace; font-size: 11px; }
.msg { display: flex; align-items: center; gap: 5px; }

.taskbar {
  display: flex;
  align-items: center;
  height: 30px;
  padding: 0 14px 0 9px;
  border-top: 1px solid #203050;
  background: linear-gradient(#8c8c84, #5c5c54 15%, #34342c 50%, #14140a 52%, #14140a);
  color: #fff;
  font: 12px/16px "DejaVu Sans Condensed", "Noto Sans CJK SC", sans-serif;
}
.start {
  display: grid;
  place-items: center;
  width: 58px;
  height: 26px;
  border: 1px solid #601008;
  border-radius: 4px;
  background: linear-gradient(#f09080, #e04838 20%, #c01c18 55%, #e03c14);
}
.quick { display: flex; align-items: center; gap: 8px; width: 117px; padding-left: 18px; }
.quick span { padding: 0 0 8px 3px; font-size: 14px; }
.task {
  display: flex;
  align-items: center;
  gap: 5px;
  width: 160px;
  height: 26px;
  padding-left: 12px;
  border-right: 1px solid #c0c0b8;
}
.task.first { width: 149px; padding-left: 1px; gap: 4px; }
.task.cur { background: linear-gradient(90deg, #d0d04000, #d0d040, #d0d04000) bottom / 100% 1px no-repeat; }
.tray { display: flex; align-items: center; gap: 2px; margin-left: auto; }
.chev { margin: 0 5px; }
.tray time { padding-left: 7px; font-size: 13px; }

.dialog {
  position: absolute;
  left: 50%;
  top: 50%;
  width: 269px;
  margin: -76px 0 0 -135px;
  padding: 0 2px 2px;
  border: 1px solid #606468;
  border-radius: 6px 6px 0 0;
  background: #101010;
}
.dtitle {
  display: flex;
  align-items: center;
  justify-content: space-between;
  height: 24px;
  margin: 0 -2px;
  padding: 0 19px 0 8px;
  border-radius: 5px 5px 0 0;
  background: linear-gradient(#909088, #50504a 25%, #33332b 45%, #12120a 50%, #12120a);
  color: #fff;
}
h2 {
  padding-top: 2px;
  font: bold 12px/16px "DejaVu Sans Condensed", sans-serif;
  white-space: nowrap;
}
.dtitle button { padding-bottom: 6px; }
.dtitle svg { display: block; }
.dbody {
  display: grid;
  grid-template-columns: 47px 1fr;
  padding: 12px 12px 14px;
  background: #f4f4f4;
}
.report {
  padding-top: 3px;
  font: 12px/14px "DejaVu Sans Condensed", "Noto Sans CJK SC", sans-serif;
  white-space: nowrap;
}
.report p { height: 14px; }
.ok {
  grid-column: 1 / 3;
  justify-self: center;
  width: 75px;
  height: 25px;
  margin-top: 17px;
  padding: 2px;
  border: 1px solid #000;
  box-shadow: inset -1px -1px #707070;
  font: 12px/16px "DejaVu Sans Condensed", sans-serif;
}
.ok span { display: block; border: 1px dotted #000; line-height: 17px; }
</style>
